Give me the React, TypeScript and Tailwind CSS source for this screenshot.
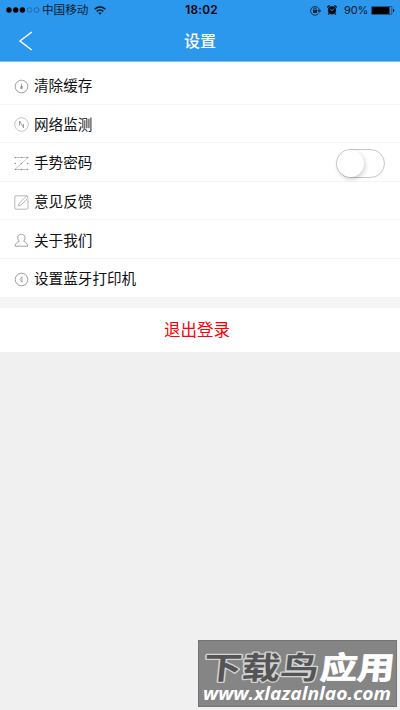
import type { ReactNode } from "react";

const stroke = {
  fill: "none",
  stroke: "currentColor",
  strokeWidth: 0.8,
};

const CacheIcon = () => (
  <svg width="15" height="15" viewBox="0 0 15 15" {...stroke}>
    <circle cx="7.5" cy="7.5" r="6.3" />
    <path d="M7.5 4.8v5M6.500 8.600l1 1.400 1-1.400" />
    <path d="M7.500 7v2.600" strokeWidth="1.800" />
  </svg>
);

const NetworkIcon = () => (
  <svg width="15" height="15" viewBox="0 0 15 15" {...stroke}>
    <circle cx="7.500" cy="7.500" r="6.800" strokeWidth="0.500" />
    <path d="M5.500 4v4.500M5.700 4l3.800 6.800V7" />
  </svg>
);

const GestureIcon = () => (
  <svg width="15" height="15" viewBox="0 0 15 15" {...stroke}>
    <path d="M1 1.500h13L1 13.500h13" strokeWidth="0.500" />
    <g fill="currentColor" stroke="none">
      {[1.500, 7.500, 13.500].map((y) =>
        [1.300, 7.500, 13.700].map((x) => <circle key={`${x}-${y}`} cx={x} cy={y} r="0.700" />)
      )}
    </g>
  </svg>
);

const FeedbackIcon = () => (
  <svg width="15" height="15" viewBox="0 0 15 15" {...stroke} strokeWidth="0.600">
    <path d="M14 4.500V13a1.200 1.200 0 0 1-1.200 1.200H2A1.200 1.200 0 0 1 .8 13V2A1.200 1.200 0 0 1 2 .8h10.800A1.200 1.200 0 0 1 14 2" />
    <path d="M4.500 11l.6-2.600 7.300-7.200 1.700 1.700L6.900 10.200z" />
  </svg>
);

const AboutIcon = () => (
  <svg width="15" height="15" viewBox="0 0 15 15" {...stroke}>
    <path d="M5.300 8.200C3.700 7 3.500 5.200 3.900 3.800 4.300 2.200 5.700 1.300 7.400 1.300s3.100.9 3.500 2.500c.4 1.400.2 3.200-1.400 4.400 2.300.9 3.900 2.300 4.300 5H1c.4-2.700 2-4.100 4.300-5z" />
  </svg>
);

const PrinterIcon = () => (
  <svg width="15" height="15" viewBox="0 0 15 15" {...stroke}>
    <circle cx="7.500" cy="7.500" r="6.300" />
    <path d="M8 4.800v5.400L6 7.500z" strokeWidth="0.700" />
  </svg>
);

const items: { label: string; icon: ReactNode; toggle?: boolean }[] = [
  { label: "清除缓存", icon: <CacheIcon /> },
  { label: "网络监测", icon: <NetworkIcon /> },
  { label: "手势密码", icon: <GestureIcon />, toggle: true },
  { label: "意见反馈", icon: <FeedbackIcon /> },
  { label: "关于我们", icon: <AboutIcon /> },
  { label: "设置蓝牙打印机", icon: <PrinterIcon /> },
];

function StatusBar() {
  return (
    <div className="grid h-5 grid-cols-3 items-center text-[11px] leading-5 text-[#0b1a2b]">
      <div className="flex items-center pl-[6px]">
        <svg width="35" height="6" viewBox="0 0 35 6">
          {[3, 9.700, 16.400].map((x) => (
            <circle key={x} cx={x} cy="3" r="2.700" fill="#000" />
          ))}
          {[23.600, 30.600].map((x) => (
            <circle key={x} cx={x} cy="3" r="2.400" fill="none" stroke="#1c5c92" strokeWidth="0.7" />
          ))}
        </svg>
        <span className="ml-[1px] whitespace-nowrap text-[11.600px]">中国移动</span>
        <svg className="ml-[6px]" width="12" height="9" viewBox="0 0 12 9" fill="none" stroke="#06121f" strokeWidth="1.500">
          <path d="M.7 3.200a7.500 7.500 0 0 1 10.600 0M2.700 5.400a4.700 4.700 0 0 1 6.600 0" />
          <path d="M6 8.800L4.300 7a2.400 2.400 0 0 1 3.400 0z" fill="#06121f" stroke="none" />
        </svg>
      </div>
      <div className="pl-[3px] text-center font-['Inter'] text-[11.800px] font-semibold tracking-[0.2px] text-black">18:02</div>
      <div className="flex items-center justify-end pr-[5px]">
        <svg width="11" height="11" viewBox="0 0 11 11" fill="none" stroke="#0d2740" strokeWidth="0.900">
          <path d="M8.500 8.500A4.400 4.400 0 1 1 9.400 5.500M7.800 5.500h3L9.300 7.400z" />
          <path d="M3 5h4v3H3z" fill="#0d2740" stroke="none" />
          <path d="M3.800 5V4a1.200 1.200 0 0 1 2.400 0v1" />
        </svg>
        <svg className="ml-[6px]" width="10" height="10" viewBox="0 0 10 10">
          <circle cx="5" cy="5.300" r="4.100" fill="#050d16" />
          <path d="M.3 2.400L2.600.4M9.700 2.400L7.400.4M2.300 8.300L1.300 9.600M7.700 8.300l1 1.300" stroke="#050d16" strokeWidth="1.300" />
          <path d="M3.700 4.400L5 5.800l2-2.200" fill="none" stroke="#2b97ed" strokeWidth="1" />
        </svg>
        <span className="ml-[7px] font-['Inter'] text-[11px] tracking-[-0.200px]">90%</span>
        <svg className="ml-[3px]" width="24" height="9" viewBox="0 0 24 9">
          <rect x=".4" y=".4" width="20.400" height="8.200" rx="1" fill="none" stroke="#0f3658" strokeWidth="0.700" />
          <rect x="1" y="1" width="17.500" height="7" fill="#000" />
          <path d="M22 2.800c1.800.4 1.800 3 0 3.400z" fill="#000" />
        </svg>
      </div>
    </div>
  );
}

export default function App() {
  return (
    <div className="flex h-[710px] w-[400px] flex-col overflow-hidden bg-[#f0f0f0] font-['Liberation_Sans','Noto_Sans_CJK_SC',sans-serif]">
      <header className="h-[62px] shrink-0 border-b border-[#85bff0] bg-[#2b97ed]">
        <StatusBar />
        <div className="grid h-[41px] grid-cols-3 items-center">
          <svg className="ml-[18px]" width="16" height="20" viewBox="0 0 16 20" fill="none" stroke="#fff" strokeWidth="1.500">
            <path d="M13.800 1L2 10l11.800 9" />
          </svg>
          <h1 className="pt-[2px] text-center text-[16px] font-medium text-white">设置</h1>
        </div>
      </header>

      <ul className="shrink-0 bg-white pt-1">
        {items.map((item) => (
          <li key={item.label} className="flex h-[38.600px] items-center border-b border-[#f5f5f5] pl-[14px] pr-[15px] pt-[3px]">
            <span className="text-[#888]">{item.icon}</span>
            <span className="ml-[5px] text-[14.600px] leading-5 text-[#111]">{item.label}</span>
            {item.toggle && (
              <span className="ml-auto flex h-[29px] w-[49px] shrink-0 items-center rounded-full border border-[#c8c4c4] bg-white">
                <span className="size-[27px] rounded-full bg-white shadow-[1px_2px_5px_rgba(0,0,0,0.2)]" />
              </span>
            )}
          </li>
        ))}
      </ul>

      <div className="h-[10px] shrink-0 bg-[#f5f5f5]" />
      <button className="h-[44px] shrink-0 bg-white pr-[6px] pt-[2px] text-[16.500px] text-[#ff0000]">退出登录</button>

      <div className="mb-[3px] ml-auto mr-[3px] mt-auto flex h-[67px] w-[199px] flex-col items-center border border-[#747474] bg-[#858585]">
        <svg width="197" height="44" viewBox="0 0 197 44" className="shrink-0 overflow-visible font-['Noto_Sans_CJK_SC',sans-serif] font-bold">
          <g transform="skewX(-6)" fontSize="31" strokeLinejoin="round">
            <text transform="scale(1.240 1)" x="6" y="38" fill="#555" stroke="#d4d4d4" strokeWidth="2.600" paintOrder="stroke">
              下载鸟
            </text>
            <text transform="scale(1.200 1)" x="103.500" y="38" fill="#fff" stroke="#fff" strokeWidth="0.800">
              应用
            </text>
          </g>
        </svg>
        <svg width="197" height="21" viewBox="0 0 197 21" className="shrink-0 overflow-visible font-['Open_Sans',sans-serif] font-bold italic">
          <text x="4" y="15" fontSize="17.500" textLength="188" lengthAdjust="spacingAndGlyphs" fill="#fff">
            www.xlazalnlao.com
          </text>
        </svg>
      </div>
    </div>
  );
}
